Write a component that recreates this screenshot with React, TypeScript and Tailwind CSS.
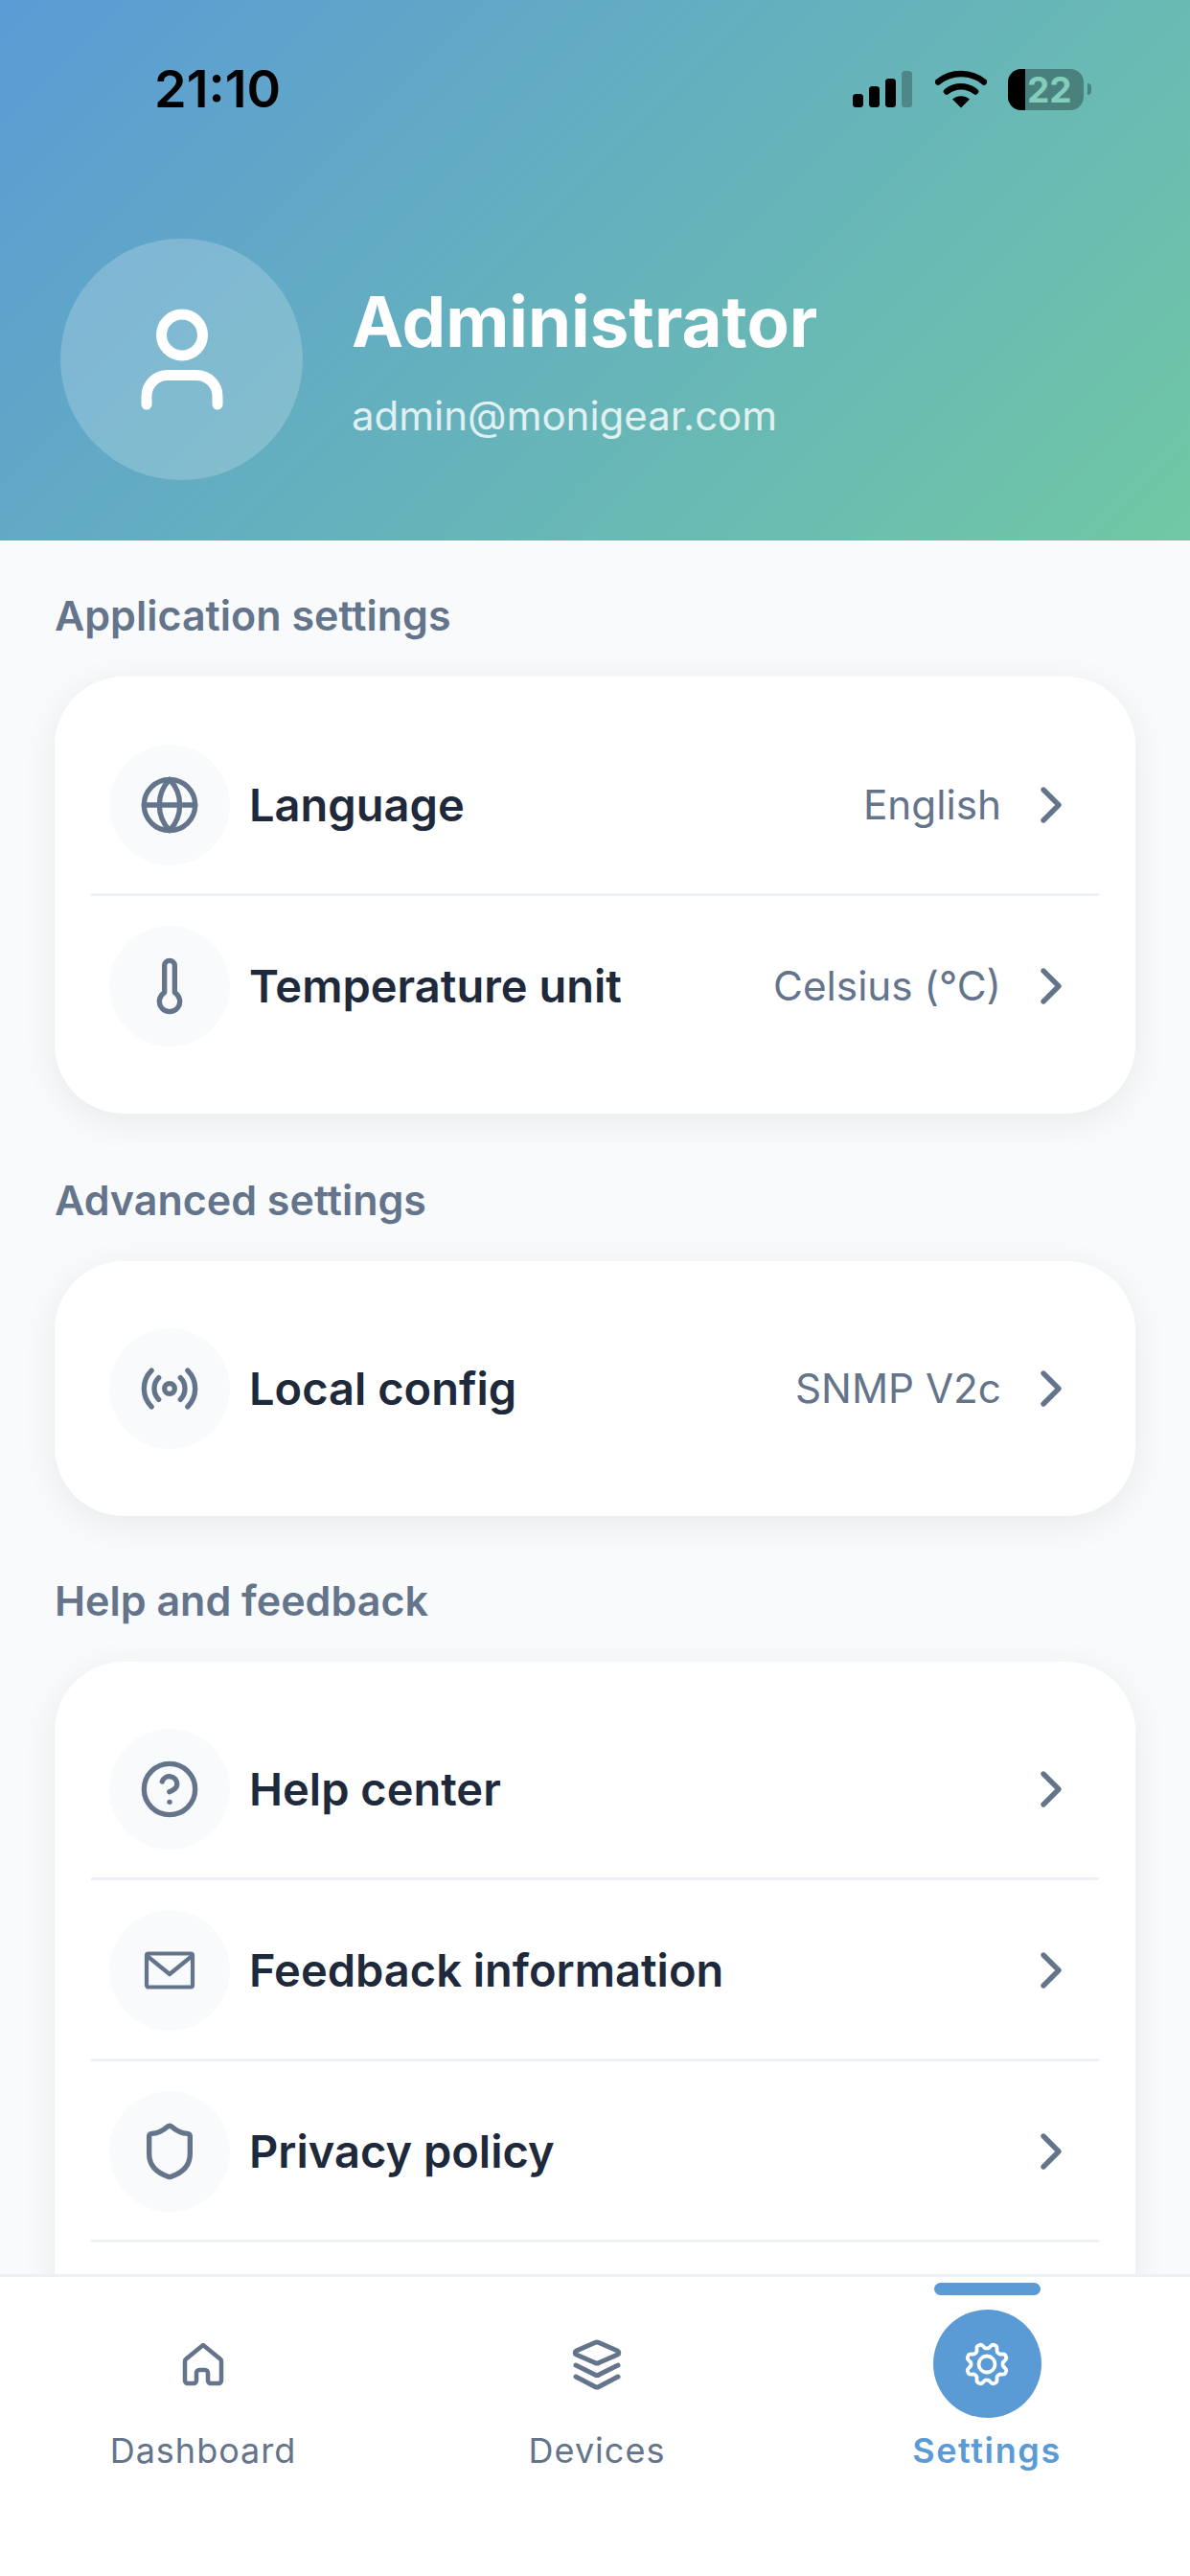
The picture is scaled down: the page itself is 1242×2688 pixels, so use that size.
import { ChevronRight, CircleHelp, Globe, Radio, Shield, Thermometer } from "lucide-react";
import type { ReactNode } from "react";

// wavy 8-lobe outline for the gear in the nav
const gearPath = Array.from({ length: 96 }, (_, i) => {
  const a = (i / 96) * Math.PI * 2;
  const wave = Math.max(-1, Math.min(1, 1.5 * Math.cos(8 * (a - Math.PI / 8))));
  const r = 19 + 2.4 * wave;
  return `${i === 0 ? "M" : "L"}${(27 + r * Math.cos(a)).toFixed(2)} ${(27 + r * Math.sin(a)).toFixed(2)}`;
}).join(" ") + "Z";

function MailIcon() {
  return (
    <svg width="64" height="64" viewBox="0 0 64 64" fill="none" stroke="currentColor" strokeWidth="4.2" strokeLinejoin="round">
      <rect x="8" y="14.5" width="48" height="35" rx="2" />
      <path d="M8 16.5 32 36 56 16.5" />
    </svg>
  );
}

function UserIcon() {
  return (
    <svg width="96" height="112" viewBox="0 0 96 112" fill="none" stroke="white" strokeWidth="11" strokeLinecap="round">
      <circle cx="48" cy="30.5" r="21.5" />
      <path d="M11 103V94.5a22 22 0 0 1 22-22h30a22 22 0 0 1 22 22v8.5" />
    </svg>
  );
}

function HomeIcon() {
  return (
    <svg width="54" height="54" viewBox="0 0 54 54" fill="none" stroke="currentColor" strokeWidth="4.5" strokeLinejoin="round">
      <path d="M8 24a3 3 0 0 1 1-2.3L27 7l18 14.7a3 3 0 0 1 1 2.3V44a3 3 0 0 1-3 3H35a3 3 0 0 1-3-3V36a3 3 0 0 0-3-3H23a3 3 0 0 0-3 3V44a3 3 0 0 1-3 3H11a3 3 0 0 1-3-3Z" />
    </svg>
  );
}

function LayersIcon() {
  return (
    <svg width="60" height="60" viewBox="0 0 60 60" fill="none" stroke="currentColor" strokeWidth="5" strokeLinecap="round" strokeLinejoin="round">
      <path d="M28 7.5a4 4 0 0 1 4 0L51.5 16a2.2 2.2 0 0 1 0 4L32 28.5a4 4 0 0 1-4 0L8.5 20a2.2 2.2 0 0 1 0-4Z" />
      <path d="M8 31 28 41a4 4 0 0 0 4 0L52 31" />
      <path d="M8 43 28 53.5a4 4 0 0 0 4 0L52 43" />
    </svg>
  );
}

function GearIcon() {
  return (
    <svg width="54" height="54" viewBox="0 0 54 54" fill="none" stroke="currentColor" strokeWidth="3.8" strokeLinejoin="round">
      <path d={gearPath} />
      <circle cx="27" cy="27" r="8.5" />
    </svg>
  );
}

function StatusIcons() {
  return (
    <div className="flex items-center">
      <svg width="62" height="40" viewBox="0 0 62 40" className="mr-6">
        <rect x="0" y="25" width="11" height="14" rx="3.5" fill="black" />
        <rect x="17" y="17" width="11" height="22" rx="3.5" fill="black" />
        <rect x="34" y="9" width="11" height="30" rx="3.5" fill="black" />
        <rect x="51" y="1" width="11" height="38" rx="3.5" fill="black" fillOpacity="0.25" />
      </svg>
      <svg width="54" height="40" viewBox="0 0 54 40" className="mr-[22px]">
        <path d="M3 12.5C17 1 37 1 51 12.5" fill="none" stroke="black" strokeWidth="6.5" strokeLinecap="round" />
        <path d="M12 22.5C21 15.5 33 15.5 42 22.5" fill="none" stroke="black" strokeWidth="6.5" strokeLinecap="round" />
        <path d="M18 30.5C23 26 31 26 36 30.5L27 39.5Z" fill="black" />
      </svg>
      <div className="relative flex h-[43px] w-[79px] items-center overflow-hidden rounded-[14px] bg-black/30">
        <div className="absolute left-0 top-0 h-full w-[18px] bg-black" />
        <span className="relative ml-5 text-[37px] font-bold leading-none text-[#85cdbb]">22</span>
      </div>
      <div className="ml-1 h-3 w-1 rounded-r-full bg-black/30" />
    </div>
  );
}

function Row({ icon, label, value, last }: { icon: ReactNode; label: string; value?: string; last?: boolean }) {
  return (
    <div className={`flex items-center gap-5 pb-[29px] pl-[19px] pr-[18px] pt-[31px] ${last ? "" : "border-b-[3px] border-[#edf0f6]"}`}>
      <div className="flex h-[126px] w-[126px] shrink-0 items-center justify-center rounded-full bg-[#f8fafc] text-[#64748b]">{icon}</div>
      <span className="flex-1 text-[47px] font-semibold text-[#1e293b]">{label}</span>
      {value && <span className="text-[42.25px] text-[#64748b]">{value}</span>}
      <ChevronRight size={64} className="text-[#64748b]" strokeWidth={2} />
    </div>
  );
}

function NavItem({ icon, label, active }: { icon: ReactNode; label: string; active?: boolean }) {
  return (
    <div className="flex flex-col items-center">
      <div className={`mb-[15px] h-[13px] w-[111px] rounded-full ${active ? "bg-[#5b9bd5]" : ""}`} />
      <div className={`flex h-[113px] w-[113px] items-center justify-center rounded-full ${active ? "bg-[#5b9bd5] text-white" : "text-[#64748b]"}`}>{icon}</div>
      <span className={`mt-[7px] text-[36px] ${active ? "font-semibold tracking-[1.6px] text-[#5b9bd5]" : "font-normal tracking-[1px] text-[#64748b]"}`}>{label}</span>
    </div>
  );
}

export default function App() {
  return (
    <div className="flex h-[2688px] w-[1242px] flex-col overflow-hidden bg-[#f8fafc] font-['Inter',sans-serif]">
      {/* Header */}
      <div className="h-[564px] shrink-0 bg-[linear-gradient(135deg,#5b9bd5,#70c8a4)] pl-[63px] pr-[103px] pt-[62px]">
        <div className="flex h-[62px] items-center justify-between pl-[98px]">
          <span className="text-[54px] font-semibold leading-none text-black">21:10</span>
          <StatusIcons />
        </div>
        <div className="mt-[125px] flex items-center gap-[51px]">
          <div className="flex h-[252px] w-[253px] items-center justify-center rounded-full bg-white/20">
            <UserIcon />
          </div>
          <div>
            <div className="text-[72.5px] font-bold leading-[88px] text-white">Administrator</div>
            <div className="mt-[29px] text-[42px] leading-[50px] text-white/80">admin@monigear.com</div>
          </div>
        </div>
      </div>

      {/* Settings list */}
      <div className="min-h-0 flex-1 overflow-hidden px-[57px] pt-[54px]">
        <h2 className="mb-[40px] text-[43px] font-semibold leading-[48px] text-[#64748b]">Application settings</h2>
        <div className="mb-[66px] rounded-[72px] bg-white px-[38px] pb-[41px] pt-[40px] shadow-[0_8px_36px_rgba(0,0,0,0.07)]">
          <Row icon={<Globe size={64} />} label="Language" value="English" />
          <Row icon={<Thermometer size={64} />} label="Temperature unit" value="Celsius (°C)" last />
        </div>
        <h2 className="mb-[40px] text-[43px] font-semibold leading-[48px] text-[#64748b]">Advanced settings</h2>
        <div className="mb-[64px] rounded-[72px] bg-white px-[38px] pb-[41px] pt-[39px] shadow-[0_8px_36px_rgba(0,0,0,0.07)]">
          <Row icon={<Radio size={64} />} label="Local config" value="SNMP V2c" last />
        </div>
        <h2 className="mb-[40px] text-[43px] font-semibold leading-[48px] text-[#64748b]">Help and feedback</h2>
        <div className="rounded-[72px] bg-white px-[38px] pb-[200px] pt-[39px] shadow-[0_8px_36px_rgba(0,0,0,0.07)]">
          <Row icon={<CircleHelp size={64} />} label="Help center" />
          <Row icon={<MailIcon />} label="Feedback information" />
          <Row icon={<Shield size={64} />} label="Privacy policy" />
        </div>
      </div>

      {/* Bottom nav */}
      <div className="grid h-[315px] shrink-0 grid-cols-[408px_414px_1fr] border-t-[3px] border-[#edf0f6] bg-white pl-2 pr-3 pt-[6px]">
        <NavItem icon={<HomeIcon />} label="Dashboard" />
        <NavItem icon={<LayersIcon />} label="Devices" />
        <NavItem icon={<GearIcon />} label="Settings" active />
      </div>
    </div>
  );
}
